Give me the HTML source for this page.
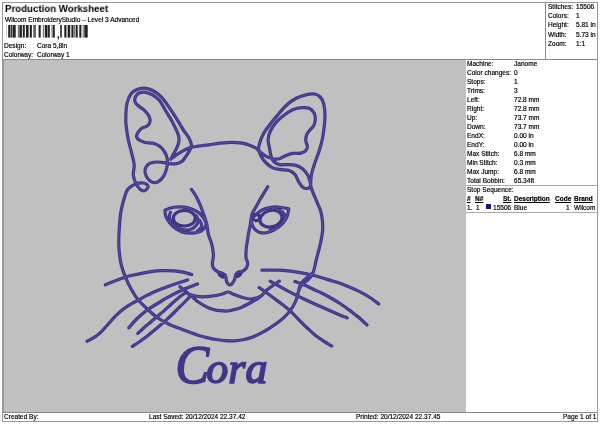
<!DOCTYPE html>
<html><head><meta charset="utf-8">
<style>
html,body{margin:0;padding:0;background:#fff;}
body{width:600px;height:424px;position:relative;overflow:hidden;font-family:"Liberation Sans",sans-serif;color:#111;}
.abs{position:absolute;white-space:nowrap;}
.t,.title,.foot{will-change:transform;color:#000;}
.t,.foot{-webkit-text-stroke:0.18px #000;}
.frame{left:2px;top:2px;width:596px;height:420px;border:1px solid #979797;box-sizing:border-box;}
.gray{left:3px;top:59px;width:463px;height:353px;background:#c0c0c0;}
.hl{height:1px;background:#8a8a8a;}
.vl{width:1px;background:#8a8a8a;}
.t{font-size:6.55px;line-height:9px;}
.title{left:4.7px;top:3.6px;font-size:10px;font-weight:bold;line-height:12px;color:#000;transform:scale(0.968,0.88);transform-origin:0 0;}
.foot{font-size:6.55px;line-height:8px;top:413px;}
.u{text-decoration:underline;font-weight:bold;font-size:6.5px;text-decoration-thickness:0.7px;text-underline-offset:0.6px;}
</style></head><body>
<div class="abs frame"></div>
<div class="abs gray"></div>
<div class="abs hl" style="left:3px;top:59px;width:594px;"></div>
<div class="abs hl" style="left:3px;top:412px;width:594px;"></div>
<div class="abs vl" style="left:545px;top:3px;height:56px;"></div>
<div class="abs vl" style="left:2px;top:59px;height:353px;width:2px;background:#999;"></div>
<div class="abs hl" style="left:466px;top:185px;width:131px;background:#aaa;"></div>
<div class="abs hl" style="left:466px;top:212px;width:131px;background:#aaa;"></div>

<div class="abs title">Production Worksheet</div>
<div class="abs t" style="left:4.5px;top:14.5px;">Wilcom EmbroideryStudio – Level 3 Advanced</div>
<svg class="abs" style="left:0;top:0;" width="100" height="42" viewBox="0 0 100 42"><rect x="6.2" y="25" width="0.5" height="12.6" fill="#999"/><rect x="8.2" y="25" width="2.0" height="12.6" fill="#222"/><rect x="10.6" y="25" width="1.8" height="12.6" fill="#333"/><rect x="12.8" y="25" width="2.9" height="12.6" fill="#222"/><rect x="17.8" y="25" width="1.2" height="12.6" fill="#777"/><rect x="19.4" y="25" width="2.5" height="12.6" fill="#222"/><rect x="22.8" y="25" width="2.0" height="12.6" fill="#222"/><rect x="26.0" y="25" width="2.6" height="12.6" fill="#222"/><rect x="29.8" y="25" width="2.1" height="12.6" fill="#222"/><rect x="33.2" y="25" width="2.8" height="12.6" fill="#666"/><rect x="38.6" y="25" width="2.1" height="12.6" fill="#222"/><rect x="42.8" y="25" width="1.2" height="12.6" fill="#777"/><rect x="44.8" y="25" width="2.5" height="12.6" fill="#222"/><rect x="47.7" y="25" width="2.1" height="12.6" fill="#222"/><rect x="51.4" y="25" width="1.3" height="12.6" fill="#777"/><rect x="53.0" y="25" width="1.8" height="12.6" fill="#222"/><rect x="60.2" y="25" width="1.6" height="12.6" fill="#222"/><rect x="64.3" y="25" width="2.1" height="12.6" fill="#222"/><rect x="66.6" y="25" width="1.0" height="12.6" fill="#888"/><rect x="68.0" y="25" width="2.2" height="12.6" fill="#222"/><rect x="71.4" y="25" width="2.1" height="12.6" fill="#222"/><rect x="73.9" y="25" width="1.7" height="12.6" fill="#777"/><rect x="76.0" y="25" width="1.7" height="12.6" fill="#222"/><rect x="79.3" y="25" width="2.1" height="12.6" fill="#222"/><rect x="82.7" y="25" width="1.2" height="12.6" fill="#888"/><rect x="84.3" y="25" width="3.4" height="12.6" fill="#222"/></svg>
<div class="abs t" style="left:57px;top:31px;font-weight:bold;font-size:9px;">,</div>
<div class="abs t" style="left:4.4px;top:40.5px;">Design:</div>
<div class="abs t" style="left:37px;top:40.5px;">Cora 5,8in</div>
<div class="abs t" style="left:4.4px;top:49.5px;">Colorway:</div>
<div class="abs t" style="left:37px;top:49.5px;">Colorway 1</div>
<div class="abs t" style="left:548px;top:2.2px;">Stitches:</div><div class="abs t" style="left:576px;top:2.2px;">15506</div>
<div class="abs t" style="left:548px;top:11.3px;">Colors:</div><div class="abs t" style="left:576px;top:11.3px;">1</div>
<div class="abs t" style="left:548px;top:20.4px;">Height:</div><div class="abs t" style="left:576px;top:20.4px;">5.81 in</div>
<div class="abs t" style="left:548px;top:29.5px;">Width:</div><div class="abs t" style="left:576px;top:29.5px;">5.73 in</div>
<div class="abs t" style="left:548px;top:38.6px;">Zoom:</div><div class="abs t" style="left:576px;top:38.6px;">1:1</div>
<div class="abs t" style="left:467px;top:59.2px;">Machine:</div><div class="abs t" style="left:514px;top:59.2px;">Janome</div>
<div class="abs t" style="left:467px;top:68.2px;">Color changes:</div><div class="abs t" style="left:514px;top:68.2px;">0</div>
<div class="abs t" style="left:467px;top:77.1px;">Stops:</div><div class="abs t" style="left:514px;top:77.1px;">1</div>
<div class="abs t" style="left:467px;top:86.1px;">Trims:</div><div class="abs t" style="left:514px;top:86.1px;">3</div>
<div class="abs t" style="left:467px;top:95.1px;">Left:</div><div class="abs t" style="left:514px;top:95.1px;">72.8 mm</div>
<div class="abs t" style="left:467px;top:104.1px;">Right:</div><div class="abs t" style="left:514px;top:104.1px;">72.8 mm</div>
<div class="abs t" style="left:467px;top:113.0px;">Up:</div><div class="abs t" style="left:514px;top:113.0px;">73.7 mm</div>
<div class="abs t" style="left:467px;top:122.0px;">Down:</div><div class="abs t" style="left:514px;top:122.0px;">73.7 mm</div>
<div class="abs t" style="left:467px;top:131.0px;">EndX:</div><div class="abs t" style="left:514px;top:131.0px;">0.00 in</div>
<div class="abs t" style="left:467px;top:139.9px;">EndY:</div><div class="abs t" style="left:514px;top:139.9px;">0.00 in</div>
<div class="abs t" style="left:467px;top:148.9px;">Max Stitch:</div><div class="abs t" style="left:514px;top:148.9px;">6.8 mm</div>
<div class="abs t" style="left:467px;top:157.9px;">Min Stitch:</div><div class="abs t" style="left:514px;top:157.9px;">0.3 mm</div>
<div class="abs t" style="left:467px;top:166.8px;">Max Jump:</div><div class="abs t" style="left:514px;top:166.8px;">6.8 mm</div>
<div class="abs t" style="left:467px;top:175.8px;">Total Bobbin:</div><div class="abs t" style="left:514px;top:175.8px;">65.34ft</div>

<div class="abs t" style="left:467px;top:185.2px;">Stop Sequence:</div>
<div class="abs t u" style="left:467px;top:194.3px;">#</div>
<div class="abs t u" style="left:475px;top:194.3px;">N#</div>
<div class="abs t u" style="right:89px;top:194.3px;">St.</div>
<div class="abs t u" style="left:514.4px;top:194.3px;">Description</div>
<div class="abs t u" style="left:554.5px;top:194.3px;">Code</div>
<div class="abs t u" style="left:574.3px;top:194.3px;">Brand</div>
<div class="abs t" style="left:467px;top:202.6px;">1.</div>
<div class="abs t" style="left:476px;top:202.6px;">1</div>
<div class="abs" style="left:486px;top:204px;width:5px;height:5px;background:#1c1878;"></div>
<div class="abs t" style="right:89px;top:202.6px;">15506</div>
<div class="abs t" style="left:514.4px;top:202.6px;">Blue</div>
<div class="abs t" style="right:30px;top:202.6px;">1</div>
<div class="abs t" style="left:574.3px;top:202.6px;">Wilcom</div>

<div class="abs foot" style="left:4px;">Created By:</div>
<div class="abs foot" style="left:149px;">Last Saved: 20/12/2024 22.37.42</div>
<div class="abs foot" style="left:356px;">Printed: 20/12/2024 22.37.45</div>
<div class="abs foot" style="right:4px;">Page 1 of 1</div>

<svg class="abs" id="cat" style="left:0;top:0;" width="600" height="424" viewBox="0 0 600 424">
<g fill="none" stroke="#3d3486" stroke-width="3.2" stroke-linecap="round" stroke-linejoin="round">
<path d="M170.8 159.2C171.9 158.4 174.7 156.1 177.1 154.5C179.5 152.9 182.4 150.9 185.0 149.7C187.6 148.4 190.0 147.7 192.9 147.0C195.8 146.3 199.7 145.9 202.4 145.5C205.1 145.1 206.1 145.2 209.0 144.8C211.9 144.4 215.9 143.6 219.7 143.2C223.5 142.8 227.9 142.3 231.7 142.3C235.5 142.3 239.2 142.7 242.3 143.2C245.4 143.7 248.1 144.7 250.3 145.5C252.5 146.3 254.4 147.2 255.7 148.0C257.0 148.8 257.5 149.6 258.3 150.3C259.1 151.0 259.1 151.2 260.4 152.2C261.7 153.2 264.1 155.3 266.2 156.4C268.3 157.5 270.6 158.4 272.8 158.8C275.0 159.2 277.2 159.4 279.4 158.8C281.6 158.2 283.8 156.4 286.0 155.5C288.2 154.6 290.1 153.8 292.6 153.4C295.1 153.0 298.6 153.6 300.8 153.1C303.0 152.6 304.7 151.7 305.8 150.6C306.9 149.5 307.4 148.2 307.4 146.5C307.4 144.8 305.9 142.6 305.8 140.7C305.7 138.8 305.9 136.7 306.6 134.9C307.3 133.1 308.9 131.5 310.0 130.0C311.1 128.5 312.6 127.7 313.5 126.0C314.4 124.3 315.2 122.1 315.3 120.0C315.4 117.9 315.2 115.2 314.2 113.3C313.2 111.3 311.3 109.2 309.2 108.3C307.1 107.4 304.3 107.5 301.7 107.7C299.1 107.9 296.1 108.4 293.3 109.5C290.5 110.6 287.8 112.5 285.0 114.5C282.2 116.5 279.2 118.8 276.7 121.7C274.2 124.6 271.4 128.7 270.0 131.7C268.6 134.7 268.2 137.2 268.1 139.9C268.0 142.6 269.0 145.3 269.5 148.1C270.0 150.8 270.4 154.2 271.1 156.4C271.8 158.6 272.2 159.9 273.6 161.3C275.0 162.7 277.1 164.1 279.4 164.6C281.7 165.1 284.9 164.5 287.6 164.6C290.4 164.7 293.4 164.7 295.9 165.4C298.4 166.1 300.6 167.2 302.5 168.7C304.4 170.2 306.2 172.4 307.4 174.5C308.6 176.6 309.4 179.2 309.9 181.1C310.4 183.0 310.9 184.9 310.5 186.1C310.1 187.3 308.7 188.4 307.4 188.5C306.1 188.6 304.0 188.1 302.5 186.9C301.0 185.7 299.6 183.2 298.3 181.1C297.1 179.0 296.5 176.3 295.0 174.5C293.5 172.7 291.6 171.2 289.3 170.4C287.0 169.6 283.8 170.0 281.0 169.6C278.2 169.2 275.3 169.0 272.8 167.9C270.3 166.8 268.1 164.9 266.2 163.0C264.3 161.1 262.4 158.6 261.2 156.4C259.9 154.2 259.0 152.0 258.7 149.8C258.4 147.6 258.8 145.9 259.6 143.2C260.4 140.4 262.2 136.1 263.7 133.3C265.1 130.6 266.1 129.6 268.3 126.7C270.5 123.8 273.6 119.7 276.7 116.1C279.8 112.5 283.4 108.0 286.7 105.0C290.0 102.0 293.4 99.7 296.7 98.0C300.0 96.3 303.7 95.3 306.7 94.6C309.7 93.9 312.4 93.6 314.6 94.0C316.9 94.4 318.7 95.5 320.2 97.0C321.7 98.5 322.7 100.6 323.5 103.3C324.3 106.0 324.8 109.7 324.9 113.3C325.0 116.9 324.8 120.8 324.4 125.0C324.0 129.2 323.4 133.8 322.5 138.2C321.6 142.6 320.3 147.3 319.0 151.4C317.7 155.5 316.1 159.2 314.8 163.0C313.6 166.8 312.2 170.9 311.5 174.5C310.8 178.1 310.7 182.0 310.7 184.4C310.7 186.8 311.3 187.5 311.7 189.0C312.1 190.5 312.3 190.9 313.3 193.3C314.3 195.7 316.2 200.2 317.5 203.3C318.8 206.4 320.0 208.6 320.8 211.7C321.6 214.8 322.2 218.4 322.5 221.7C322.8 225.0 322.8 228.4 322.5 231.7C322.2 235.0 321.4 238.6 320.8 241.7C320.2 244.8 319.6 246.8 318.8 250.0C318.0 253.2 316.9 257.3 316.0 261.0C315.1 264.7 314.5 268.9 313.3 272.0C312.1 275.1 310.6 277.2 308.7 279.3C306.8 281.4 303.6 282.6 302.0 284.5C300.4 286.4 299.7 288.1 298.8 290.5C297.9 292.9 297.5 296.3 296.5 299.0C295.5 301.7 294.3 304.3 292.8 306.8C291.3 309.3 289.6 311.6 287.4 314.0C285.2 316.4 282.7 318.8 279.8 321.1C276.9 323.4 273.2 325.8 270.0 327.8C266.8 329.9 263.5 331.8 260.5 333.4C257.5 335.0 254.9 336.2 252.0 337.3C249.1 338.4 246.0 339.2 243.0 339.8C240.0 340.4 237.0 340.7 234.0 340.8C231.0 340.9 228.0 340.9 225.0 340.7C222.0 340.5 219.0 340.0 216.0 339.5C213.0 339.0 210.0 338.3 207.0 337.6C204.0 336.9 201.0 336.1 198.0 335.2C195.0 334.3 192.0 333.2 189.0 332.1C186.0 331.0 183.2 329.8 180.0 328.6C176.8 327.4 173.6 326.5 170.0 324.8C166.4 323.1 161.9 320.8 158.3 318.3C154.7 315.8 151.6 313.1 148.3 310.0C145.0 306.9 141.1 303.3 138.3 300.0C135.5 296.7 133.9 293.9 131.7 290.0C129.5 286.1 126.8 280.5 125.1 276.3C123.4 272.1 122.2 268.6 121.3 265.0C120.4 261.4 120.0 258.1 119.6 255.0C119.2 251.9 119.0 249.5 118.9 246.7C118.8 243.9 118.7 240.9 118.8 238.0C118.9 235.1 119.1 232.0 119.3 229.0C119.5 226.0 119.6 223.2 119.9 220.0C120.2 216.8 120.5 213.6 121.2 210.0C121.9 206.4 123.2 201.7 124.2 198.3C125.2 194.9 126.1 191.7 127.5 189.6C128.9 187.5 130.8 186.6 132.4 185.6C134.0 184.6 135.1 183.8 136.9 183.4C138.7 183.0 141.5 182.7 143.3 183.0C145.1 183.3 146.8 184.1 147.5 185.0C148.2 185.9 148.1 187.3 147.5 188.3C146.9 189.3 145.4 190.7 144.2 190.8C142.9 191.0 141.4 190.4 140.0 189.2C138.6 187.9 136.9 185.7 135.8 183.3C134.7 180.9 133.6 178.1 133.3 175.0C133.0 171.9 134.5 168.6 134.2 165.0C133.9 161.4 132.7 157.5 131.7 153.3C130.7 149.1 129.1 143.9 128.3 140.0C127.5 136.1 127.1 133.3 126.7 130.0C126.3 126.7 125.8 124.5 125.8 120.0C125.8 115.5 126.1 107.7 127.0 103.3C127.9 98.9 129.6 95.8 131.3 93.5C133.0 91.2 134.9 90.4 137.0 89.5C139.1 88.6 141.2 87.9 143.8 88.1C146.4 88.3 149.7 89.0 152.6 90.5C155.5 92.0 158.3 93.8 161.3 96.9C164.3 100.0 167.8 105.4 170.5 109.3C173.2 113.2 175.4 116.8 177.6 120.3C179.8 123.8 181.5 127.1 183.4 130.0C185.3 132.9 187.6 135.5 188.9 137.9C190.2 140.3 191.0 142.4 191.3 144.2C191.6 146.0 191.3 147.1 190.5 148.9C189.7 150.8 188.0 153.2 186.6 155.3C185.2 157.4 183.7 160.2 181.8 161.6C180.0 163.0 177.9 163.6 175.5 163.9C173.1 164.2 170.5 163.5 167.6 163.2C164.7 162.9 161.2 162.0 158.3 162.0C155.4 162.0 152.1 162.4 150.0 163.3C147.9 164.2 146.6 165.8 145.8 167.5C145.0 169.2 144.9 171.4 145.3 173.3C145.7 175.2 147.0 177.7 148.3 179.2C149.6 180.7 151.6 182.1 153.3 182.5C155.0 182.9 156.6 182.7 158.3 181.7C160.0 180.7 161.9 178.9 163.3 176.7C164.7 174.5 166.0 170.9 166.7 168.3C167.4 165.7 167.5 163.1 167.5 161.0C167.5 158.9 167.1 157.7 166.5 156.0C165.9 154.3 165.1 152.6 164.0 151.0C162.9 149.4 161.8 147.8 160.0 146.5C158.2 145.2 155.8 144.0 153.3 143.3C150.8 142.6 147.3 143.1 145.0 142.5C142.7 141.9 140.6 140.9 139.2 140.0C137.8 139.1 137.0 138.1 136.7 137.0C136.4 135.9 136.7 134.8 137.5 133.3C138.3 131.9 140.0 129.6 141.7 128.3C143.4 127.1 146.1 126.9 147.5 125.8C148.9 124.7 149.7 123.2 150.0 121.7C150.3 120.2 150.0 118.5 149.2 116.7C148.4 114.9 146.8 112.6 145.0 110.8C143.2 109.0 140.0 107.3 138.3 105.8C136.6 104.3 135.4 103.4 135.0 101.9C134.6 100.4 134.8 98.1 135.6 96.6C136.3 95.1 137.9 93.5 139.5 92.8C141.1 92.1 142.8 91.8 145.0 92.2C147.2 92.6 150.0 93.5 152.4 94.9C154.8 96.3 157.3 97.9 159.5 100.6C161.7 103.3 163.8 107.7 165.8 111.0C167.8 114.3 169.8 117.3 171.6 120.5C173.3 123.7 175.1 127.4 176.3 130.0C177.5 132.6 178.3 134.2 178.7 136.3C179.1 138.4 179.1 140.5 178.7 142.6C178.3 144.7 177.2 146.9 176.3 148.9C175.4 150.9 174.1 152.8 173.2 154.5C172.3 156.2 171.2 158.4 170.8 159.2 M191.5 189.4C192.3 190.6 194.7 193.8 196.2 196.5C197.7 199.2 199.1 202.4 200.4 205.5C201.7 208.6 202.9 212.2 204.0 215.3C205.1 218.4 206.1 220.9 206.8 224.0C207.5 227.1 207.5 230.4 208.3 233.8C209.1 237.2 211.0 240.9 211.8 244.5C212.7 248.1 213.3 252.0 213.4 255.1C213.5 258.1 212.5 260.9 212.4 262.8C212.3 264.8 212.3 265.6 212.8 266.8C213.3 268.0 214.3 269.1 215.2 270.0C216.1 270.9 217.3 271.4 218.4 272.0C219.5 272.6 220.9 272.8 222.0 273.3C223.1 273.8 224.3 274.3 225.0 275.0C225.7 275.7 225.8 276.7 226.0 277.5C226.2 278.3 226.0 278.9 226.2 279.8C226.4 280.7 226.8 281.9 227.2 282.6C227.6 283.3 228.0 283.8 228.4 284.2C228.8 284.6 229.3 284.8 229.8 284.9C230.3 284.9 230.8 284.8 231.2 284.5C231.6 284.2 231.9 283.9 232.4 283.2C232.9 282.5 233.7 281.4 234.2 280.4C234.7 279.4 235.0 278.1 235.2 277.2C235.4 276.3 235.2 275.8 235.6 275.0C236.0 274.2 236.6 272.9 237.6 272.4C238.6 271.8 240.4 272.1 241.5 271.7C242.6 271.3 243.5 270.8 244.4 270.0C245.3 269.2 246.4 268.0 246.9 266.8C247.4 265.6 247.8 264.2 247.6 262.6C247.4 261.0 246.2 259.7 246.0 257.3C245.8 254.9 246.1 250.9 246.3 248.0C246.6 245.1 247.1 242.5 247.5 240.0C247.9 237.5 248.2 235.2 248.6 232.9C249.0 230.6 249.6 228.5 250.0 226.3C250.4 224.1 250.6 221.9 251.0 219.7C251.4 217.5 251.5 215.3 252.4 213.1C253.3 210.9 255.0 208.7 256.2 206.5C257.4 204.3 258.7 201.8 259.7 200.0C260.7 198.2 261.1 197.8 262.4 195.6C263.7 193.4 266.8 188.3 267.7 186.8 M165.0 210.2C165.9 209.8 168.1 208.6 170.4 208.0C172.7 207.4 176.1 207.0 178.9 206.9C181.7 206.8 184.7 207.0 187.4 207.6C190.1 208.2 192.7 209.3 194.9 210.4C197.1 211.5 199.0 212.8 200.6 214.2C202.2 215.6 203.4 217.3 204.3 218.9C205.2 220.5 205.9 222.8 206.2 223.6 M165.0 210.2C165.1 211.2 165.0 213.9 165.7 216.0C166.4 218.1 167.8 220.5 169.4 222.6C171.0 224.7 172.9 226.7 175.1 228.3C177.3 229.9 179.9 231.3 182.6 232.1C185.3 232.9 188.4 233.2 191.1 233.2C193.8 233.2 196.6 232.8 198.7 232.1C200.8 231.4 202.2 230.3 203.4 229.2C204.6 228.1 205.4 226.1 205.8 225.5 M170.4 212.3C170.2 213.1 169.1 215.1 169.4 217.0C169.7 218.9 170.7 221.7 172.3 223.6C173.9 225.5 176.6 227.2 178.9 228.3C181.2 229.4 184.1 230.2 186.4 230.2C188.8 230.2 191.2 229.4 193.0 228.3C194.8 227.2 196.5 225.2 197.3 223.6C198.1 222.0 197.9 220.2 197.7 218.9C197.5 217.6 196.5 216.5 196.3 216.0 M199.6 220.3C199.9 221.0 201.3 223.2 201.5 224.5C201.7 225.8 201.2 227.3 200.6 228.3C200.0 229.3 198.2 230.3 197.7 230.7 M276.0 209.3C277.1 209.8 281.0 210.7 282.5 212.0C284.0 213.3 285.0 215.2 285.0 217.0C285.0 218.8 283.9 221.2 282.6 223.0C281.3 224.8 279.1 226.4 277.0 227.7C274.9 229.0 271.2 230.1 270.0 230.6 M255.2 215.5C256.1 214.7 258.7 212.0 260.9 210.7C263.1 209.4 265.6 208.5 268.4 207.9C271.2 207.3 274.4 206.8 277.8 207.0C281.2 207.2 286.9 208.5 288.7 208.8 M288.7 208.8C288.5 210.0 288.2 213.6 287.3 215.9C286.4 218.2 285.1 220.5 283.5 222.5C281.9 224.5 280.2 226.1 277.8 227.7C275.4 229.3 272.1 231.1 269.4 232.0C266.7 232.9 264.0 233.2 261.8 232.9C259.6 232.7 257.7 231.6 256.2 230.5C254.7 229.4 253.6 227.8 252.8 226.3C252.0 224.8 251.6 222.4 251.4 221.6 M180.0 286.7C180.7 287.2 182.6 288.8 184.0 290.0C185.4 291.2 187.0 292.6 188.3 293.7C189.6 294.8 190.3 295.1 192.0 296.5C193.7 297.9 195.6 300.1 198.3 302.0C201.0 303.9 205.7 306.5 208.3 307.8C210.9 309.1 212.1 309.1 214.0 309.6C215.9 310.1 217.7 310.5 220.0 310.7C222.3 310.9 225.8 311.1 228.0 311.0C230.2 310.9 231.3 310.3 233.3 309.8C235.3 309.3 237.2 309.1 240.0 308.0C242.8 306.9 246.7 304.8 250.0 303.0C253.3 301.2 257.2 299.1 260.0 297.0C262.8 294.9 264.2 292.3 266.5 290.3C268.8 288.3 271.7 286.3 273.8 284.8C275.9 283.3 278.4 281.8 279.3 281.2 M190.0 294.5C191.7 294.9 196.4 296.4 200.0 296.7C203.6 297.0 208.1 296.6 211.7 296.2C215.3 295.8 219.0 294.9 221.7 294.2C224.4 293.5 226.1 292.0 228.0 292.0C229.9 292.0 231.0 293.3 233.3 294.2C235.6 295.1 238.9 296.5 241.7 297.3C244.5 298.1 247.6 298.9 250.0 299.0C252.4 299.1 254.3 298.4 256.0 298.0C257.7 297.6 259.3 296.8 260.0 296.5 M312.5 273.2C311.8 273.8 309.6 275.5 308.0 276.8C306.4 278.1 304.3 279.7 303.0 281.2C301.7 282.7 300.7 284.4 300.0 286.0C299.3 287.6 298.8 290.2 298.6 291.0 M105.3 284.8C107.8 283.8 115.9 280.5 120.0 279.0C124.1 277.5 125.5 276.9 130.0 275.8C134.4 274.7 142.2 273.1 146.7 272.3C151.1 271.5 153.4 271.1 156.7 270.8C160.0 270.5 162.8 270.6 166.7 270.7C170.6 270.8 175.8 271.1 180.0 271.7C184.2 272.3 189.8 274.0 191.7 274.5 M87.1 341.3C88.3 340.6 91.8 339.0 94.2 337.4C96.6 335.8 98.9 334.0 101.2 331.8C103.5 329.6 105.9 326.6 108.3 324.0C110.7 321.4 113.0 318.6 115.4 316.2C117.8 313.8 120.1 311.7 122.5 309.8C124.9 307.9 127.2 306.4 129.6 304.9C131.9 303.4 134.2 302.3 136.6 301.0C138.9 299.7 141.3 298.4 143.7 297.1C146.1 295.9 148.1 294.8 150.8 293.5C153.5 292.2 156.5 291.0 160.0 289.6C163.5 288.2 167.4 286.6 172.0 285.0C176.6 283.4 184.9 280.8 187.5 280.0 M128.8 327.9C130.1 326.4 134.1 321.5 136.6 319.0C139.1 316.5 141.3 314.6 143.7 312.7C146.1 310.8 148.1 309.5 150.8 307.7C153.5 305.9 157.3 303.6 160.0 302.0C162.7 300.4 162.8 299.9 166.7 297.8C170.6 295.7 178.2 291.8 183.3 289.5C188.4 287.2 195.1 284.9 197.5 284.0 M137.8 333.4C138.8 332.5 141.5 329.9 143.7 328.0C145.9 326.1 148.1 324.3 150.8 322.0C153.5 319.7 156.5 317.3 160.0 314.3C163.5 311.3 168.1 307.0 171.7 303.8C175.3 300.6 179.3 297.1 181.7 295.3C184.0 293.5 185.1 293.2 185.8 292.8 M132.4 346.4C133.6 345.6 136.9 343.5 139.5 341.7C142.1 339.9 144.6 338.2 148.0 335.5C151.4 332.8 156.9 328.2 160.0 325.6C163.1 323.0 163.9 322.3 166.7 319.7C169.5 317.1 173.4 313.3 176.7 310.0C180.0 306.7 184.4 302.4 186.7 300.0C189.0 297.6 189.9 296.2 190.5 295.5 M261.9 270.2C264.5 270.2 271.9 269.9 277.5 270.2C283.1 270.5 289.7 270.9 295.8 271.8C301.9 272.7 308.1 274.0 314.2 275.5C320.3 277.0 327.4 279.4 332.5 281.0C337.6 282.6 340.5 283.4 345.0 285.2C349.5 287.0 355.4 289.5 359.7 291.6C364.0 293.7 367.5 295.9 370.7 298.0C373.9 300.1 377.4 303.0 378.7 304.0 M294.9 281.5C296.4 282.1 300.9 283.5 304.0 284.8C307.1 286.1 310.3 287.9 313.3 289.3C316.3 290.7 318.9 291.8 322.0 293.3C325.1 294.8 328.7 296.8 331.7 298.5C334.7 300.2 337.2 301.7 340.0 303.5C342.8 305.3 345.8 307.6 348.3 309.4C350.8 311.2 353.1 313.0 355.0 314.5C356.9 316.0 358.0 316.8 360.0 318.5C362.0 320.2 365.8 323.9 367.0 325.0 M270.2 281.2C272.9 282.7 280.9 287.2 286.7 290.3C292.5 293.4 298.9 296.6 305.0 299.5C311.1 302.4 317.8 305.4 323.3 307.8C328.8 310.2 334.0 312.5 338.0 314.2C342.0 315.9 345.7 317.3 347.2 317.9 M259.2 287.6C261.3 289.1 268.2 294.0 272.0 296.8C275.8 299.6 279.0 301.9 282.0 304.2C285.0 306.5 287.3 308.1 290.0 310.6C292.7 313.1 295.5 316.4 298.3 319.2C301.1 322.0 303.9 324.9 306.7 327.5C309.5 330.1 312.2 332.8 315.0 335.0C317.8 337.2 320.5 339.1 323.3 340.9C326.1 342.7 330.3 345.1 331.7 346.0"/>
<ellipse cx="184.3" cy="218.2" rx="11" ry="7.8"/>
<ellipse cx="271" cy="218.7" rx="11.2" ry="8.2" transform="rotate(-15 271 218.7)"/>
<circle cx="256.3" cy="217.4" r="3.3"/>
<ellipse cx="221.8" cy="274.9" rx="3" ry="1.4" transform="rotate(32 221.8 274.9)"/>
<ellipse cx="238.5" cy="274.3" rx="2.8" ry="1.4" transform="rotate(-38 238.5 274.3)"/>
</g>
<g fill="none" stroke="#6a62b4" stroke-width="0.8" stroke-linecap="round" stroke-linejoin="round" opacity="0.7">
<path d="M170.8 159.2C171.9 158.4 174.7 156.1 177.1 154.5C179.5 152.9 182.4 150.9 185.0 149.7C187.6 148.4 190.0 147.7 192.9 147.0C195.8 146.3 199.7 145.9 202.4 145.5C205.1 145.1 206.1 145.2 209.0 144.8C211.9 144.4 215.9 143.6 219.7 143.2C223.5 142.8 227.9 142.3 231.7 142.3C235.5 142.3 239.2 142.7 242.3 143.2C245.4 143.7 248.1 144.7 250.3 145.5C252.5 146.3 254.4 147.2 255.7 148.0C257.0 148.8 257.5 149.6 258.3 150.3C259.1 151.0 259.1 151.2 260.4 152.2C261.7 153.2 264.1 155.3 266.2 156.4C268.3 157.5 270.6 158.4 272.8 158.8C275.0 159.2 277.2 159.4 279.4 158.8C281.6 158.2 283.8 156.4 286.0 155.5C288.2 154.6 290.1 153.8 292.6 153.4C295.1 153.0 298.6 153.6 300.8 153.1C303.0 152.6 304.7 151.7 305.8 150.6C306.9 149.5 307.4 148.2 307.4 146.5C307.4 144.8 305.9 142.6 305.8 140.7C305.7 138.8 305.9 136.7 306.6 134.9C307.3 133.1 308.9 131.5 310.0 130.0C311.1 128.5 312.6 127.7 313.5 126.0C314.4 124.3 315.2 122.1 315.3 120.0C315.4 117.9 315.2 115.2 314.2 113.3C313.2 111.3 311.3 109.2 309.2 108.3C307.1 107.4 304.3 107.5 301.7 107.7C299.1 107.9 296.1 108.4 293.3 109.5C290.5 110.6 287.8 112.5 285.0 114.5C282.2 116.5 279.2 118.8 276.7 121.7C274.2 124.6 271.4 128.7 270.0 131.7C268.6 134.7 268.2 137.2 268.1 139.9C268.0 142.6 269.0 145.3 269.5 148.1C270.0 150.8 270.4 154.2 271.1 156.4C271.8 158.6 272.2 159.9 273.6 161.3C275.0 162.7 277.1 164.1 279.4 164.6C281.7 165.1 284.9 164.5 287.6 164.6C290.4 164.7 293.4 164.7 295.9 165.4C298.4 166.1 300.6 167.2 302.5 168.7C304.4 170.2 306.2 172.4 307.4 174.5C308.6 176.6 309.4 179.2 309.9 181.1C310.4 183.0 310.9 184.9 310.5 186.1C310.1 187.3 308.7 188.4 307.4 188.5C306.1 188.6 304.0 188.1 302.5 186.9C301.0 185.7 299.6 183.2 298.3 181.1C297.1 179.0 296.5 176.3 295.0 174.5C293.5 172.7 291.6 171.2 289.3 170.4C287.0 169.6 283.8 170.0 281.0 169.6C278.2 169.2 275.3 169.0 272.8 167.9C270.3 166.8 268.1 164.9 266.2 163.0C264.3 161.1 262.4 158.6 261.2 156.4C259.9 154.2 259.0 152.0 258.7 149.8C258.4 147.6 258.8 145.9 259.6 143.2C260.4 140.4 262.2 136.1 263.7 133.3C265.1 130.6 266.1 129.6 268.3 126.7C270.5 123.8 273.6 119.7 276.7 116.1C279.8 112.5 283.4 108.0 286.7 105.0C290.0 102.0 293.4 99.7 296.7 98.0C300.0 96.3 303.7 95.3 306.7 94.6C309.7 93.9 312.4 93.6 314.6 94.0C316.9 94.4 318.7 95.5 320.2 97.0C321.7 98.5 322.7 100.6 323.5 103.3C324.3 106.0 324.8 109.7 324.9 113.3C325.0 116.9 324.8 120.8 324.4 125.0C324.0 129.2 323.4 133.8 322.5 138.2C321.6 142.6 320.3 147.3 319.0 151.4C317.7 155.5 316.1 159.2 314.8 163.0C313.6 166.8 312.2 170.9 311.5 174.5C310.8 178.1 310.7 182.0 310.7 184.4C310.7 186.8 311.3 187.5 311.7 189.0C312.1 190.5 312.3 190.9 313.3 193.3C314.3 195.7 316.2 200.2 317.5 203.3C318.8 206.4 320.0 208.6 320.8 211.7C321.6 214.8 322.2 218.4 322.5 221.7C322.8 225.0 322.8 228.4 322.5 231.7C322.2 235.0 321.4 238.6 320.8 241.7C320.2 244.8 319.6 246.8 318.8 250.0C318.0 253.2 316.9 257.3 316.0 261.0C315.1 264.7 314.5 268.9 313.3 272.0C312.1 275.1 310.6 277.2 308.7 279.3C306.8 281.4 303.6 282.6 302.0 284.5C300.4 286.4 299.7 288.1 298.8 290.5C297.9 292.9 297.5 296.3 296.5 299.0C295.5 301.7 294.3 304.3 292.8 306.8C291.3 309.3 289.6 311.6 287.4 314.0C285.2 316.4 282.7 318.8 279.8 321.1C276.9 323.4 273.2 325.8 270.0 327.8C266.8 329.9 263.5 331.8 260.5 333.4C257.5 335.0 254.9 336.2 252.0 337.3C249.1 338.4 246.0 339.2 243.0 339.8C240.0 340.4 237.0 340.7 234.0 340.8C231.0 340.9 228.0 340.9 225.0 340.7C222.0 340.5 219.0 340.0 216.0 339.5C213.0 339.0 210.0 338.3 207.0 337.6C204.0 336.9 201.0 336.1 198.0 335.2C195.0 334.3 192.0 333.2 189.0 332.1C186.0 331.0 183.2 329.8 180.0 328.6C176.8 327.4 173.6 326.5 170.0 324.8C166.4 323.1 161.9 320.8 158.3 318.3C154.7 315.8 151.6 313.1 148.3 310.0C145.0 306.9 141.1 303.3 138.3 300.0C135.5 296.7 133.9 293.9 131.7 290.0C129.5 286.1 126.8 280.5 125.1 276.3C123.4 272.1 122.2 268.6 121.3 265.0C120.4 261.4 120.0 258.1 119.6 255.0C119.2 251.9 119.0 249.5 118.9 246.7C118.8 243.9 118.7 240.9 118.8 238.0C118.9 235.1 119.1 232.0 119.3 229.0C119.5 226.0 119.6 223.2 119.9 220.0C120.2 216.8 120.5 213.6 121.2 210.0C121.9 206.4 123.2 201.7 124.2 198.3C125.2 194.9 126.1 191.7 127.5 189.6C128.9 187.5 130.8 186.6 132.4 185.6C134.0 184.6 135.1 183.8 136.9 183.4C138.7 183.0 141.5 182.7 143.3 183.0C145.1 183.3 146.8 184.1 147.5 185.0C148.2 185.9 148.1 187.3 147.5 188.3C146.9 189.3 145.4 190.7 144.2 190.8C142.9 191.0 141.4 190.4 140.0 189.2C138.6 187.9 136.9 185.7 135.8 183.3C134.7 180.9 133.6 178.1 133.3 175.0C133.0 171.9 134.5 168.6 134.2 165.0C133.9 161.4 132.7 157.5 131.7 153.3C130.7 149.1 129.1 143.9 128.3 140.0C127.5 136.1 127.1 133.3 126.7 130.0C126.3 126.7 125.8 124.5 125.8 120.0C125.8 115.5 126.1 107.7 127.0 103.3C127.9 98.9 129.6 95.8 131.3 93.5C133.0 91.2 134.9 90.4 137.0 89.5C139.1 88.6 141.2 87.9 143.8 88.1C146.4 88.3 149.7 89.0 152.6 90.5C155.5 92.0 158.3 93.8 161.3 96.9C164.3 100.0 167.8 105.4 170.5 109.3C173.2 113.2 175.4 116.8 177.6 120.3C179.8 123.8 181.5 127.1 183.4 130.0C185.3 132.9 187.6 135.5 188.9 137.9C190.2 140.3 191.0 142.4 191.3 144.2C191.6 146.0 191.3 147.1 190.5 148.9C189.7 150.8 188.0 153.2 186.6 155.3C185.2 157.4 183.7 160.2 181.8 161.6C180.0 163.0 177.9 163.6 175.5 163.9C173.1 164.2 170.5 163.5 167.6 163.2C164.7 162.9 161.2 162.0 158.3 162.0C155.4 162.0 152.1 162.4 150.0 163.3C147.9 164.2 146.6 165.8 145.8 167.5C145.0 169.2 144.9 171.4 145.3 173.3C145.7 175.2 147.0 177.7 148.3 179.2C149.6 180.7 151.6 182.1 153.3 182.5C155.0 182.9 156.6 182.7 158.3 181.7C160.0 180.7 161.9 178.9 163.3 176.7C164.7 174.5 166.0 170.9 166.7 168.3C167.4 165.7 167.5 163.1 167.5 161.0C167.5 158.9 167.1 157.7 166.5 156.0C165.9 154.3 165.1 152.6 164.0 151.0C162.9 149.4 161.8 147.8 160.0 146.5C158.2 145.2 155.8 144.0 153.3 143.3C150.8 142.6 147.3 143.1 145.0 142.5C142.7 141.9 140.6 140.9 139.2 140.0C137.8 139.1 137.0 138.1 136.7 137.0C136.4 135.9 136.7 134.8 137.5 133.3C138.3 131.9 140.0 129.6 141.7 128.3C143.4 127.1 146.1 126.9 147.5 125.8C148.9 124.7 149.7 123.2 150.0 121.7C150.3 120.2 150.0 118.5 149.2 116.7C148.4 114.9 146.8 112.6 145.0 110.8C143.2 109.0 140.0 107.3 138.3 105.8C136.6 104.3 135.4 103.4 135.0 101.9C134.6 100.4 134.8 98.1 135.6 96.6C136.3 95.1 137.9 93.5 139.5 92.8C141.1 92.1 142.8 91.8 145.0 92.2C147.2 92.6 150.0 93.5 152.4 94.9C154.8 96.3 157.3 97.9 159.5 100.6C161.7 103.3 163.8 107.7 165.8 111.0C167.8 114.3 169.8 117.3 171.6 120.5C173.3 123.7 175.1 127.4 176.3 130.0C177.5 132.6 178.3 134.2 178.7 136.3C179.1 138.4 179.1 140.5 178.7 142.6C178.3 144.7 177.2 146.9 176.3 148.9C175.4 150.9 174.1 152.8 173.2 154.5C172.3 156.2 171.2 158.4 170.8 159.2 M191.5 189.4C192.3 190.6 194.7 193.8 196.2 196.5C197.7 199.2 199.1 202.4 200.4 205.5C201.7 208.6 202.9 212.2 204.0 215.3C205.1 218.4 206.1 220.9 206.8 224.0C207.5 227.1 207.5 230.4 208.3 233.8C209.1 237.2 211.0 240.9 211.8 244.5C212.7 248.1 213.3 252.0 213.4 255.1C213.5 258.1 212.5 260.9 212.4 262.8C212.3 264.8 212.3 265.6 212.8 266.8C213.3 268.0 214.3 269.1 215.2 270.0C216.1 270.9 217.3 271.4 218.4 272.0C219.5 272.6 220.9 272.8 222.0 273.3C223.1 273.8 224.3 274.3 225.0 275.0C225.7 275.7 225.8 276.7 226.0 277.5C226.2 278.3 226.0 278.9 226.2 279.8C226.4 280.7 226.8 281.9 227.2 282.6C227.6 283.3 228.0 283.8 228.4 284.2C228.8 284.6 229.3 284.8 229.8 284.9C230.3 284.9 230.8 284.8 231.2 284.5C231.6 284.2 231.9 283.9 232.4 283.2C232.9 282.5 233.7 281.4 234.2 280.4C234.7 279.4 235.0 278.1 235.2 277.2C235.4 276.3 235.2 275.8 235.6 275.0C236.0 274.2 236.6 272.9 237.6 272.4C238.6 271.8 240.4 272.1 241.5 271.7C242.6 271.3 243.5 270.8 244.4 270.0C245.3 269.2 246.4 268.0 246.9 266.8C247.4 265.6 247.8 264.2 247.6 262.6C247.4 261.0 246.2 259.7 246.0 257.3C245.8 254.9 246.1 250.9 246.3 248.0C246.6 245.1 247.1 242.5 247.5 240.0C247.9 237.5 248.2 235.2 248.6 232.9C249.0 230.6 249.6 228.5 250.0 226.3C250.4 224.1 250.6 221.9 251.0 219.7C251.4 217.5 251.5 215.3 252.4 213.1C253.3 210.9 255.0 208.7 256.2 206.5C257.4 204.3 258.7 201.8 259.7 200.0C260.7 198.2 261.1 197.8 262.4 195.6C263.7 193.4 266.8 188.3 267.7 186.8 M165.0 210.2C165.9 209.8 168.1 208.6 170.4 208.0C172.7 207.4 176.1 207.0 178.9 206.9C181.7 206.8 184.7 207.0 187.4 207.6C190.1 208.2 192.7 209.3 194.9 210.4C197.1 211.5 199.0 212.8 200.6 214.2C202.2 215.6 203.4 217.3 204.3 218.9C205.2 220.5 205.9 222.8 206.2 223.6 M165.0 210.2C165.1 211.2 165.0 213.9 165.7 216.0C166.4 218.1 167.8 220.5 169.4 222.6C171.0 224.7 172.9 226.7 175.1 228.3C177.3 229.9 179.9 231.3 182.6 232.1C185.3 232.9 188.4 233.2 191.1 233.2C193.8 233.2 196.6 232.8 198.7 232.1C200.8 231.4 202.2 230.3 203.4 229.2C204.6 228.1 205.4 226.1 205.8 225.5 M170.4 212.3C170.2 213.1 169.1 215.1 169.4 217.0C169.7 218.9 170.7 221.7 172.3 223.6C173.9 225.5 176.6 227.2 178.9 228.3C181.2 229.4 184.1 230.2 186.4 230.2C188.8 230.2 191.2 229.4 193.0 228.3C194.8 227.2 196.5 225.2 197.3 223.6C198.1 222.0 197.9 220.2 197.7 218.9C197.5 217.6 196.5 216.5 196.3 216.0 M199.6 220.3C199.9 221.0 201.3 223.2 201.5 224.5C201.7 225.8 201.2 227.3 200.6 228.3C200.0 229.3 198.2 230.3 197.7 230.7 M276.0 209.3C277.1 209.8 281.0 210.7 282.5 212.0C284.0 213.3 285.0 215.2 285.0 217.0C285.0 218.8 283.9 221.2 282.6 223.0C281.3 224.8 279.1 226.4 277.0 227.7C274.9 229.0 271.2 230.1 270.0 230.6 M255.2 215.5C256.1 214.7 258.7 212.0 260.9 210.7C263.1 209.4 265.6 208.5 268.4 207.9C271.2 207.3 274.4 206.8 277.8 207.0C281.2 207.2 286.9 208.5 288.7 208.8 M288.7 208.8C288.5 210.0 288.2 213.6 287.3 215.9C286.4 218.2 285.1 220.5 283.5 222.5C281.9 224.5 280.2 226.1 277.8 227.7C275.4 229.3 272.1 231.1 269.4 232.0C266.7 232.9 264.0 233.2 261.8 232.9C259.6 232.7 257.7 231.6 256.2 230.5C254.7 229.4 253.6 227.8 252.8 226.3C252.0 224.8 251.6 222.4 251.4 221.6 M180.0 286.7C180.7 287.2 182.6 288.8 184.0 290.0C185.4 291.2 187.0 292.6 188.3 293.7C189.6 294.8 190.3 295.1 192.0 296.5C193.7 297.9 195.6 300.1 198.3 302.0C201.0 303.9 205.7 306.5 208.3 307.8C210.9 309.1 212.1 309.1 214.0 309.6C215.9 310.1 217.7 310.5 220.0 310.7C222.3 310.9 225.8 311.1 228.0 311.0C230.2 310.9 231.3 310.3 233.3 309.8C235.3 309.3 237.2 309.1 240.0 308.0C242.8 306.9 246.7 304.8 250.0 303.0C253.3 301.2 257.2 299.1 260.0 297.0C262.8 294.9 264.2 292.3 266.5 290.3C268.8 288.3 271.7 286.3 273.8 284.8C275.9 283.3 278.4 281.8 279.3 281.2 M190.0 294.5C191.7 294.9 196.4 296.4 200.0 296.7C203.6 297.0 208.1 296.6 211.7 296.2C215.3 295.8 219.0 294.9 221.7 294.2C224.4 293.5 226.1 292.0 228.0 292.0C229.9 292.0 231.0 293.3 233.3 294.2C235.6 295.1 238.9 296.5 241.7 297.3C244.5 298.1 247.6 298.9 250.0 299.0C252.4 299.1 254.3 298.4 256.0 298.0C257.7 297.6 259.3 296.8 260.0 296.5 M312.5 273.2C311.8 273.8 309.6 275.5 308.0 276.8C306.4 278.1 304.3 279.7 303.0 281.2C301.7 282.7 300.7 284.4 300.0 286.0C299.3 287.6 298.8 290.2 298.6 291.0 M105.3 284.8C107.8 283.8 115.9 280.5 120.0 279.0C124.1 277.5 125.5 276.9 130.0 275.8C134.4 274.7 142.2 273.1 146.7 272.3C151.1 271.5 153.4 271.1 156.7 270.8C160.0 270.5 162.8 270.6 166.7 270.7C170.6 270.8 175.8 271.1 180.0 271.7C184.2 272.3 189.8 274.0 191.7 274.5 M87.1 341.3C88.3 340.6 91.8 339.0 94.2 337.4C96.6 335.8 98.9 334.0 101.2 331.8C103.5 329.6 105.9 326.6 108.3 324.0C110.7 321.4 113.0 318.6 115.4 316.2C117.8 313.8 120.1 311.7 122.5 309.8C124.9 307.9 127.2 306.4 129.6 304.9C131.9 303.4 134.2 302.3 136.6 301.0C138.9 299.7 141.3 298.4 143.7 297.1C146.1 295.9 148.1 294.8 150.8 293.5C153.5 292.2 156.5 291.0 160.0 289.6C163.5 288.2 167.4 286.6 172.0 285.0C176.6 283.4 184.9 280.8 187.5 280.0 M128.8 327.9C130.1 326.4 134.1 321.5 136.6 319.0C139.1 316.5 141.3 314.6 143.7 312.7C146.1 310.8 148.1 309.5 150.8 307.7C153.5 305.9 157.3 303.6 160.0 302.0C162.7 300.4 162.8 299.9 166.7 297.8C170.6 295.7 178.2 291.8 183.3 289.5C188.4 287.2 195.1 284.9 197.5 284.0 M137.8 333.4C138.8 332.5 141.5 329.9 143.7 328.0C145.9 326.1 148.1 324.3 150.8 322.0C153.5 319.7 156.5 317.3 160.0 314.3C163.5 311.3 168.1 307.0 171.7 303.8C175.3 300.6 179.3 297.1 181.7 295.3C184.0 293.5 185.1 293.2 185.8 292.8 M132.4 346.4C133.6 345.6 136.9 343.5 139.5 341.7C142.1 339.9 144.6 338.2 148.0 335.5C151.4 332.8 156.9 328.2 160.0 325.6C163.1 323.0 163.9 322.3 166.7 319.7C169.5 317.1 173.4 313.3 176.7 310.0C180.0 306.7 184.4 302.4 186.7 300.0C189.0 297.6 189.9 296.2 190.5 295.5 M261.9 270.2C264.5 270.2 271.9 269.9 277.5 270.2C283.1 270.5 289.7 270.9 295.8 271.8C301.9 272.7 308.1 274.0 314.2 275.5C320.3 277.0 327.4 279.4 332.5 281.0C337.6 282.6 340.5 283.4 345.0 285.2C349.5 287.0 355.4 289.5 359.7 291.6C364.0 293.7 367.5 295.9 370.7 298.0C373.9 300.1 377.4 303.0 378.7 304.0 M294.9 281.5C296.4 282.1 300.9 283.5 304.0 284.8C307.1 286.1 310.3 287.9 313.3 289.3C316.3 290.7 318.9 291.8 322.0 293.3C325.1 294.8 328.7 296.8 331.7 298.5C334.7 300.2 337.2 301.7 340.0 303.5C342.8 305.3 345.8 307.6 348.3 309.4C350.8 311.2 353.1 313.0 355.0 314.5C356.9 316.0 358.0 316.8 360.0 318.5C362.0 320.2 365.8 323.9 367.0 325.0 M270.2 281.2C272.9 282.7 280.9 287.2 286.7 290.3C292.5 293.4 298.9 296.6 305.0 299.5C311.1 302.4 317.8 305.4 323.3 307.8C328.8 310.2 334.0 312.5 338.0 314.2C342.0 315.9 345.7 317.3 347.2 317.9 M259.2 287.6C261.3 289.1 268.2 294.0 272.0 296.8C275.8 299.6 279.0 301.9 282.0 304.2C285.0 306.5 287.3 308.1 290.0 310.6C292.7 313.1 295.5 316.4 298.3 319.2C301.1 322.0 303.9 324.9 306.7 327.5C309.5 330.1 312.2 332.8 315.0 335.0C317.8 337.2 320.5 339.1 323.3 340.9C326.1 342.7 330.3 345.1 331.7 346.0"/>
</g>
<g font-family="'Liberation Serif',serif" font-style="italic" fill="#40378a" stroke="#40378a" stroke-width="1.7" stroke-linejoin="round"><text transform="translate(175.6 383) scale(0.93 1)" font-size="54">C</text><text x="206.3" y="383" font-size="44">ora</text></g>
</svg>
</body></html>
